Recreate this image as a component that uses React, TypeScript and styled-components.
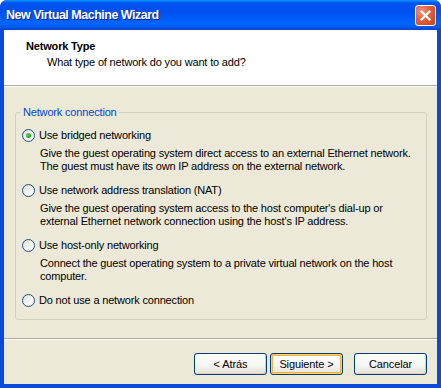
import React from 'react';
import styled, { createGlobalStyle } from 'styled-components';

const GlobalStyle = createGlobalStyle`
  html, body {
    margin: 0;
    padding: 0;
    background: #ffffff;
  }
`;

const uiFont = `'Liberation Sans', Arial, sans-serif`;

const Window = styled.div`
  width: 441px;
  height: 388px;
  display: flex;
  flex-direction: column;
  box-sizing: border-box;
  border-radius: 7px 7px 0 0;
  overflow: hidden;
  background: #0a49dc;
  font-family: ${uiFont};
  font-size: 11px;
  letter-spacing: -0.17px;
  color: #000;
`;

const TitleBar = styled.div`
  height: 30px;
  flex: none;
  display: flex;
  align-items: center;
  justify-content: space-between;
  padding: 0 5px 0 6px;
  background: linear-gradient(
    to bottom,
    #0997ff 0%,
    #0053ee 10%,
    #0050ee 40%,
    #0066ff 80%,
    #0055e5 92%,
    #0041ce 100%
  );
`;

const Title = styled.span`
  color: #ffffff;
  font-weight: bold;
  font-size: 12.5px;
  letter-spacing: -0.5px;
  text-shadow: 1px 1px 0 #0a1e80;
`;

const CloseButton = styled.div`
  width: 19px;
  height: 19px;
  margin-top: 1px;
  border: 1px solid #ffffff;
  border-radius: 3px;
  display: flex;
  align-items: center;
  justify-content: center;
  background: radial-gradient(circle at 30% 30%, #f0957c 0%, #e0603d 45%, #c8401b 100%);
`;

const Frame = styled.div`
  flex: 1;
  display: flex;
  flex-direction: column;
  margin: 0 4px 4px 4px;
  background: #ece9d8;
`;

const Header = styled.div`
  height: 56px;
  flex: none;
  background: #ffffff;
  border-bottom: 1px solid #aca899;
  box-shadow: 0 1px 0 #ffffff;
  box-sizing: border-box;
  padding: 9px 0 0 22px;
`;

const HeaderTitle = styled.div`
  font-weight: bold;
  line-height: 14px;
`;

const HeaderSubtitle = styled.div`
  margin: 2px 0 0 21px;
  line-height: 14px;
`;

const Body = styled.div`
  flex: 1;
  padding: 20px 10px 0 11px;
`;

const Group = styled.fieldset`
  margin: 0;
  padding: 10px 0 13px 6px;
  border: 1px solid #d0d0bf;
  border-radius: 3px;
  height: 214px;
  box-sizing: border-box;
`;

const Legend = styled.legend`
  color: #0046d5;
  padding: 0 2px 0 3px;
  margin-left: -2px;
  line-height: 13px;
`;

const Option = styled.div`
  margin-bottom: 11px;
  &:last-child {
    margin-bottom: 0;
  }
`;

const OptionRow = styled.label`
  display: flex;
  align-items: center;
  gap: 4px;
  height: 13px;
  line-height: 13px;
`;

const Radio = styled.span<{ $checked?: boolean }>`
  width: 13px;
  height: 13px;
  box-sizing: border-box;
  border-radius: 50%;
  border: 1px solid #1c5180;
  background: linear-gradient(135deg, #dcdcd6 0%, #f2f2ee 50%, #ffffff 100%);
  display: flex;
  align-items: center;
  justify-content: center;
  flex: none;

  &::after {
    content: '';
    display: ${(p) => (p.$checked ? 'block' : 'none')};
    width: 5px;
    height: 5px;
    border-radius: 50%;
    background: radial-gradient(circle at 35% 35%, #5fd35f 0%, #21a121 70%, #187a18 100%);
  }
`;

const Description = styled.div`
  margin: 5px 0 0 18px;
  line-height: 13px;
`;

const Separator = styled.div`
  height: 1px;
  background: #aca899;
  box-shadow: 0 1px 0 #ffffff;
`;

const Footer = styled.div`
  height: 45px;
  display: flex;
  justify-content: flex-end;
  padding: 14px 10px 0 0;
  box-sizing: border-box;
`;

const Button = styled.button<{ $default?: boolean; $gap?: number }>`
  width: 73px;
  height: 22px;
  margin-left: ${(p) => p.$gap ?? 0}px;
  padding: 0;
  font-family: ${uiFont};
  font-size: 11px;
  letter-spacing: -0.1px;
  color: #000;
  border: 1px solid #003c74;
  border-radius: 3px;
  background: linear-gradient(to bottom, #ffffff 0%, #f4f4f0 60%, #e3e2da 100%);
  box-shadow: ${(p) =>
    p.$default
      ? 'inset 0 0 0 1px #f8d36d, inset 0 0 0 2px #f3b244'
      : 'inset -1px -1px 0 #d6d0c5'};
`;

const CloseIcon = () => (
  <svg width="13" height="13" viewBox="0 0 13 13">
    <path d="M2.5 2.5 L10.5 10.5 M10.5 2.5 L2.5 10.5" stroke="#ffffff" strokeWidth="2.2" strokeLinecap="square" />
  </svg>
);

const options = [
  {
    label: 'Use bridged networking',
    checked: true,
    lines: [
      'Give the guest operating system direct access to an external Ethernet network.',
      'The guest must have its own IP address on the external network.',
    ],
  },
  {
    label: 'Use network address translation (NAT)',
    lines: [
      "Give the guest operating system access to the host computer's dial-up or",
      "external Ethernet network connection using the host's IP address.",
    ],
  },
  {
    label: 'Use host-only networking',
    lines: [
      'Connect the guest operating system to a private virtual network on the host',
      'computer.',
    ],
  },
  {
    label: 'Do not use a network connection',
    lines: [],
  },
];

export default function App() {
  return (
    <>
      <GlobalStyle />
      <Window>
        <TitleBar>
          <Title>New Virtual Machine Wizard</Title>
          <CloseButton>
            <CloseIcon />
          </CloseButton>
        </TitleBar>
        <Frame>
          <Header>
            <HeaderTitle>Network Type</HeaderTitle>
            <HeaderSubtitle>What type of network do you want to add?</HeaderSubtitle>
          </Header>
          <Body>
            <Group>
              <Legend>Network connection</Legend>
              {options.map((opt) => (
                <Option key={opt.label}>
                  <OptionRow>
                    <Radio $checked={opt.checked} />
                    <span>{opt.label}</span>
                  </OptionRow>
                  {opt.lines.length > 0 && (
                    <Description>
                      {opt.lines.map((line) => (
                        <div key={line}>{line}</div>
                      ))}
                    </Description>
                  )}
                </Option>
              ))}
            </Group>
          </Body>
          <Separator />
          <Footer>
            <Button>&lt; Atrás</Button>
            <Button $default $gap={3}>Siguiente &gt;</Button>
            <Button $gap={11}>Cancelar</Button>
          </Footer>
        </Frame>
      </Window>
    </>
  );
}
